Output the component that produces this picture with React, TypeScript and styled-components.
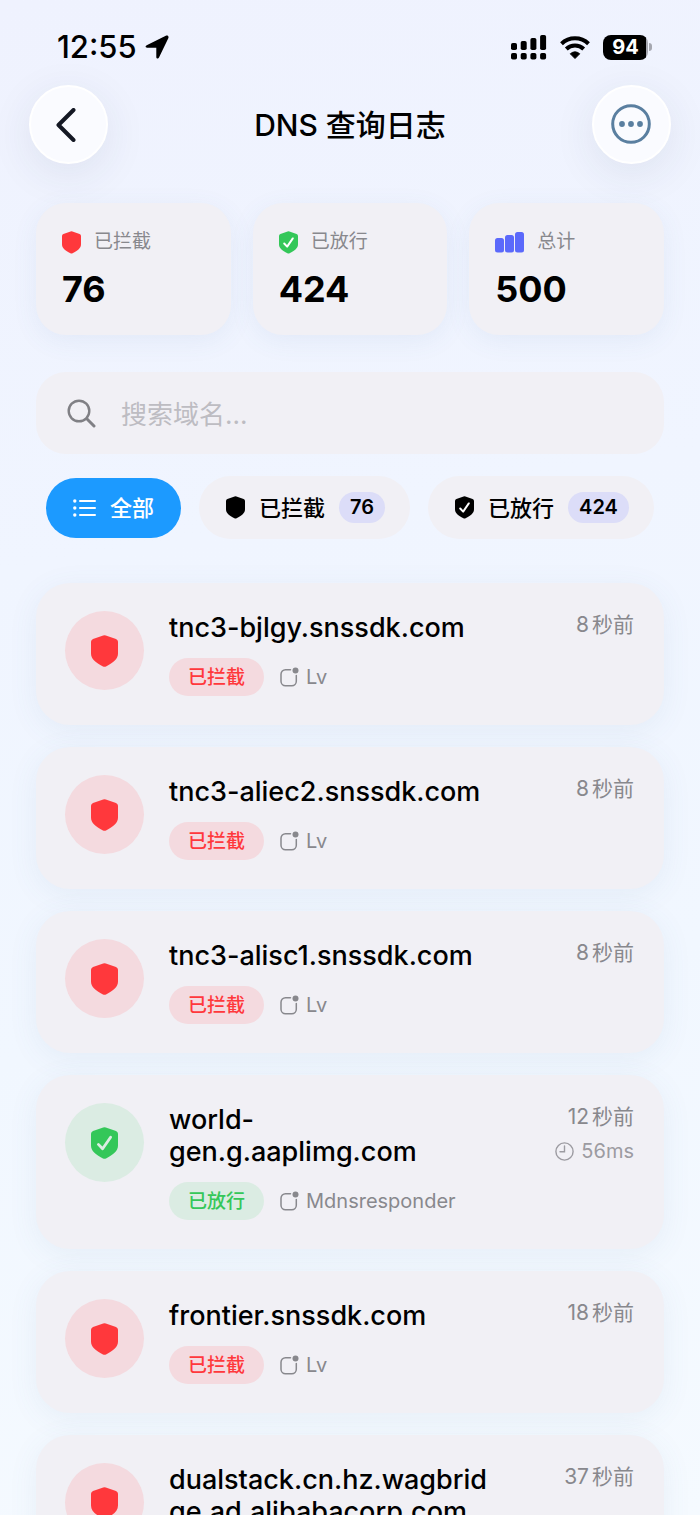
import React from "react";
import styled, { createGlobalStyle } from "styled-components";

const GlobalStyle = createGlobalStyle`
  * { box-sizing: border-box; }
  body { margin: 0; background: #f0f5ff; }
  button, input { font: inherit; color: inherit; }
`;

const FONT = `Inter, "Noto Sans CJK SC", sans-serif`;
const RED = "#ff383c";
const GREEN = "#34c759";
const GREY = "#88888d";
const SURFACE = "#f1f0f5";

const Screen = styled.div`
  height: 100vh;
  overflow: hidden auto;
  scrollbar-width: none;
  font-family: ${FONT};
  color: #000;
  background: linear-gradient(170deg, #eff2fe 0%, #f0f5ff 35%, #f1f7ff 65%, #f5faff 100%);
`;

const StatusBar = styled.div`
  display: flex;
  justify-content: space-between;
  align-items: center;
  height: 85px;
  padding: 9px 48px 0 57px;
`;

const Clock = styled.div`
  display: flex;
  align-items: center;
  gap: 8px;
  font-size: 31px;
  font-weight: 500;
  line-height: 36px;
`;

const StatusIcons = styled.div`
  display: flex;
  align-items: center;
  gap: 13px;
`;

const Battery = styled.div`
  display: flex;
  align-items: center;
  gap: 1px;
`;

const BatteryLevel = styled.span`
  width: 45px;
  height: 25px;
  border-radius: 8px;
  background: linear-gradient(90deg, #000 43px, #a5a7b0 43px);
  color: #fff;
  font-size: 20px;
  font-weight: 700;
  line-height: 25px;
  text-align: center;
`;

const BatteryTip = styled.span`
  width: 3px;
  height: 8px;
  border-radius: 0 4px 4px 0;
  background: #a5a7b0;
`;

const Header = styled.header`
  display: flex;
  justify-content: space-between;
  align-items: center;
  padding: 0 29px;
`;

const Title = styled.h1`
  margin: 0;
  font-size: 30px;
  font-weight: 500;
  line-height: 40px;
`;

const RoundButton = styled.button`
  display: flex;
  align-items: center;
  justify-content: center;
  width: 79px;
  height: 79px;
  padding: 0;
  border: 2px solid #fff;
  border-radius: 50%;
  background: #fafbff;
  box-shadow: 0 10px 44px rgba(40, 50, 90, 0.09);
`;

const Main = styled.main`
  padding: 39px 36px 22px;
`;

const Stats = styled.section`
  display: grid;
  grid-template-columns: repeat(3, 1fr);
  gap: 22px;
`;

const StatCard = styled.div`
  display: flex;
  flex-direction: column;
  gap: 15px;
  height: 132px;
  padding: 27px 26px 0;
  border-radius: 30px;
  background: ${SURFACE};
  box-shadow: 0 6px 26px rgba(80, 120, 160, 0.08);
`;

const StatLabel = styled.div`
  display: flex;
  align-items: center;
  gap: 13px;
  color: ${GREY};
  font-size: 19px;
  line-height: 24px;
`;

const StatValue = styled.div`
  font-size: 36px;
  font-weight: 700;
  line-height: 40px;
`;

const SearchBox = styled.label`
  display: flex;
  align-items: center;
  gap: 25px;
  height: 82px;
  margin-top: 37px;
  padding: 0 31px;
  border-radius: 30px;
  background: ${SURFACE};
`;

const SearchInput = styled.input`
  flex: 1;
  min-width: 0;
  padding: 3px 0 0;
  border: 0;
  outline: 0;
  background: transparent;
  font-size: 26px;
  line-height: 36px;
  &::placeholder { color: #bdbcc2; opacity: 1; }
`;

const Filters = styled.div`
  display: flex;
  align-items: center;
  gap: 18px;
  margin-top: 22px;
  padding: 0 10px;
`;

const Chip = styled.button<{ $active?: boolean }>`
  display: flex;
  align-items: center;
  gap: 14px;
  height: ${(p) => (p.$active ? 60 : 63)}px;
  padding: 0 ${(p) => (p.$active ? 27 : 25)}px 0 27px;
  border: 0;
  border-radius: 32px;
  background: ${(p) => (p.$active ? "#1c9aff" : SURFACE)};
  color: ${(p) => (p.$active ? "#fff" : "#000")};
  font-size: 22px;
  font-weight: 500;
  line-height: 30px;
  white-space: nowrap;
`;

const Count = styled.span`
  height: 31px;
  padding: 0 11px;
  border-radius: 16px;
  background: #dcddf8;
  font-size: 20px;
  font-weight: 600;
  line-height: 31px;
`;

const List = styled.ul`
  display: flex;
  flex-direction: column;
  gap: 22px;
  margin: 44px 0 0;
  padding: 0;
  list-style: none;
`;

const Entry = styled.li`
  display: flex;
  align-items: flex-start;
  padding: 28px 30px 29px 29px;
  border-radius: 34px;
  background: ${SURFACE};
  box-shadow: 0 6px 30px rgba(80, 115, 150, 0.08);
`;

const Badge = styled.div<{ $blocked: boolean }>`
  display: flex;
  align-items: center;
  justify-content: center;
  flex: none;
  width: 79px;
  height: 79px;
  border-radius: 50%;
  background: ${(p) => (p.$blocked ? "#f4dadf" : "#dbece3")};
`;

const Info = styled.div`
  flex: 1;
  min-width: 0;
  margin: 0 24px 0 25px;
  padding-top: 1px;
`;

const Domain = styled.div`
  font-size: 27px;
  font-weight: 500;
  line-height: 32px;
  overflow-wrap: anywhere;
`;

const Meta = styled.div`
  display: flex;
  align-items: center;
  gap: 16px;
  margin-top: 14px;
`;

const Tag = styled.span<{ $blocked: boolean }>`
  height: 38px;
  padding: 0 19px;
  border-radius: 19px;
  background: ${(p) => (p.$blocked ? "#f4dadf" : "#dbece3")};
  color: ${(p) => (p.$blocked ? RED : GREEN)};
  font-size: 19px;
  font-weight: 500;
  line-height: 40px;
`;

const Source = styled.span`
  display: flex;
  align-items: center;
  gap: 7px;
  color: ${GREY};
  font-size: 20px;
  line-height: 24px;
`;

const Timing = styled.div`
  display: flex;
  flex-direction: column;
  align-items: flex-end;
  gap: 8px;
  width: 120px;
  color: ${GREY};
  font-size: 20px;
  line-height: 24px;
  white-space: nowrap;
`;

const Ago = styled.span`
  display: flex;
  gap: 3px;
  font-size: 21px;
  line-height: 28px;
`;

const Latency = styled.span`
  display: flex;
  align-items: center;
  gap: 7px;
  color: #9c9ba1;
`;

const Shield = ({ w, color, check }: { w: number; color: string; check?: string }) => (
  <svg width={w} height={Math.round((w * 32) / 27)} viewBox="0 0 27 32" aria-hidden="true">
    <path
      d="M12.2.4Q13.5-.1 14.8.4L25 3.9Q27 4.7 27 6.8V18.5C27 24 22.5 27.600 15 31.400Q13.500 32.200 12 31.400C4.500 27.600 0 24 0 18.500V6.800Q0 4.700 2 3.900Z"
      fill={color}
    />
    {check && (
      <path d="M7.400 17.400 11.600 21.800 19.600 10.200" fill="none" stroke={check} strokeWidth="2.800" strokeLinecap="round" strokeLinejoin="round" />
    )}
  </svg>
);

const LocationArrow = () => (
  <svg width="24" height="24" viewBox="0 0 24 24" aria-hidden="true">
    <path d="M1.700 10.200 20.800.7C22.700-.1 24.100 1.300 23.300 3.200L14 22.600C13.300 24.100 11.300 23.700 11.300 22V12.700H2.100C.3 12.700 0 11 1.700 10.200Z" fill="#000" />
  </svg>
);

const Signal = () => (
  <svg width="36" height="26" viewBox="0 0 36 26" aria-hidden="true">
    {[9, 7, 4, 1].map((y, i) => (
      <g key={y}>
        <rect x={i * 9.7} y={y} width="6" height={16 - y} rx="1.800" />
        <rect x={i * 9.7} y="19" width="6" height="6.500" rx="1.800" />
      </g>
    ))}
  </svg>
);

const Wifi = () => (
  <svg width="30" height="23" viewBox="0 0 30 23" aria-hidden="true">
    <path d="M1.500 7.800A19.500 19.500 0 0 1 28.500 7.800" fill="none" stroke="#000" strokeWidth="4" />
    <path d="M6.300 13A12.500 12.500 0 0 1 23.700 13" fill="none" stroke="#000" strokeWidth="4" />
    <path d="M15 22.500 10.300 17.800Q15 13.900 19.700 17.800Z" fill="#000" stroke="#000" strokeLinejoin="round" />
  </svg>
);

const BackIcon = () => (
  <svg width="25" height="34" viewBox="0 0 25 34" aria-hidden="true">
    <path d="M17.500 2 2.500 17 17.500 32" fill="none" stroke="#141824" strokeWidth="4" strokeLinecap="round" strokeLinejoin="round" />
  </svg>
);

const MoreIcon = () => (
  <svg width="41" height="41" viewBox="0 0 41 41" fill="#5a7fa0" aria-hidden="true">
    <circle cx="20" cy="20" r="18.300" fill="none" stroke="#5a7fa0" strokeWidth="3" />
    <circle cx="11" cy="20" r="2.900" />
    <circle cx="20" cy="20" r="2.900" />
    <circle cx="29" cy="20" r="2.900" />
  </svg>
);

const BarsIcon = () => (
  <svg width="29" height="21" viewBox="0 0 29 21" fill="#5b69fb" aria-hidden="true">
    <rect x="0" y="6" width="9" height="14.500" rx="2.500" />
    <rect x="10" y="3" width="9" height="17.500" rx="2.500" />
    <rect x="20" y="0" width="9" height="20.500" rx="2.500" />
  </svg>
);

const SearchIcon = () => (
  <svg width="29" height="29" viewBox="0 0 29 29" fill="none" stroke="#808085" strokeLinecap="round" aria-hidden="true">
    <circle cx="12" cy="12" r="10.300" strokeWidth="2.400" />
    <path d="M19.800 19.800 27 27" strokeWidth="3" />
  </svg>
);

const ListIcon = () => (
  <svg width="23" height="18" viewBox="0 0 23 18" fill="#fff" aria-hidden="true">
    {[2, 9, 16].map((y) => (
      <g key={y}>
        <circle cx="1.800" cy={y} r="1.700" />
        <rect x="6" y={y - 1} width="17" height="2" rx="1" />
      </g>
    ))}
  </svg>
);

const AppIcon = () => (
  <svg width="19" height="20" viewBox="0 0 19 20" aria-hidden="true">
    <path d="M10.500 2.700H5.500A4.500 4.500 0 0 0 1 7.200V14.300A4.500 4.500 0 0 0 5.500 18.800H11.800A4.500 4.500 0 0 0 16.300 14.300V8.500" fill="none" stroke={GREY} strokeWidth="1.500" strokeLinecap="round" />
    <circle cx="15.500" cy="3.500" r="3" fill={GREY} />
  </svg>
);

const ClockIcon = () => (
  <svg width="19" height="19" viewBox="0 0 19 19" fill="none" stroke="#9c9ba1" strokeWidth="1.400" strokeLinecap="round" aria-hidden="true">
    <circle cx="9.500" cy="9.500" r="8.600" />
    <path d="M9.500 4V9.700H5" />
  </svg>
);

type Log = { domain: string; blocked: boolean; source: string; seconds: number; latency?: string };

const LOGS: Log[] = [
  { domain: "tnc3-bjlgy.snssdk.com", blocked: true, source: "Lv", seconds: 8 },
  { domain: "tnc3-aliec2.snssdk.com", blocked: true, source: "Lv", seconds: 8 },
  { domain: "tnc3-alisc1.snssdk.com", blocked: true, source: "Lv", seconds: 8 },
  { domain: "world-gen.g.aaplimg.com", blocked: false, source: "Mdnsresponder", seconds: 12, latency: "56ms" },
  { domain: "frontier.snssdk.com", blocked: true, source: "Lv", seconds: 18 },
  { domain: "dualstack.cn.hz.wagbridge.ad.alibabacorp.com", blocked: true, source: "Lv", seconds: 37 },
];

const LogEntry = ({ log }: { log: Log }) => (
  <Entry>
    <Badge $blocked={log.blocked}>
      <Shield w={27} color={log.blocked ? RED : GREEN} check={log.blocked ? undefined : "#dbece3"} />
    </Badge>
    <Info>
      <Domain>{log.domain}</Domain>
      <Meta>
        <Tag $blocked={log.blocked}>{log.blocked ? "已拦截" : "已放行"}</Tag>
        <Source>
          <AppIcon />
          {log.source}
        </Source>
      </Meta>
    </Info>
    <Timing>
      <Ago>
        <span>{log.seconds}</span>
        <span>秒前</span>
      </Ago>
      {log.latency && (
        <Latency>
          <ClockIcon />
          {log.latency}
        </Latency>
      )}
    </Timing>
  </Entry>
);

export default function App() {
  return (
    <Screen>
      <GlobalStyle />
      <StatusBar>
        <Clock>
          12:55
          <LocationArrow />
        </Clock>
        <StatusIcons>
          <Signal />
          <Wifi />
          <Battery>
            <BatteryLevel>94</BatteryLevel>
            <BatteryTip />
          </Battery>
        </StatusIcons>
      </StatusBar>
      <Header>
        <RoundButton aria-label="返回">
          <BackIcon />
        </RoundButton>
        <Title>DNS 查询日志</Title>
        <RoundButton aria-label="更多">
          <MoreIcon />
        </RoundButton>
      </Header>
      <Main>
        <Stats>
          <StatCard>
            <StatLabel>
              <Shield w={19} color={RED} />
              已拦截
            </StatLabel>
            <StatValue>76</StatValue>
          </StatCard>
          <StatCard>
            <StatLabel>
              <Shield w={19} color={GREEN} check="#fff" />
              已放行
            </StatLabel>
            <StatValue>424</StatValue>
          </StatCard>
          <StatCard>
            <StatLabel>
              <BarsIcon />
              总计
            </StatLabel>
            <StatValue>500</StatValue>
          </StatCard>
        </Stats>
        <SearchBox>
          <SearchIcon />
          <SearchInput type="text" placeholder="搜索域名..." aria-label="搜索域名" />
        </SearchBox>
        <Filters>
          <Chip $active>
            <ListIcon />
            全部
          </Chip>
          <Chip>
            <Shield w={19} color="#000" />
            已拦截
            <Count>76</Count>
          </Chip>
          <Chip>
            <Shield w={19} color="#000" check="#fff" />
            已放行
            <Count>424</Count>
          </Chip>
        </Filters>
        <List>
          {LOGS.map((log) => (
            <LogEntry key={log.domain} log={log} />
          ))}
        </List>
      </Main>
    </Screen>
  );
}
